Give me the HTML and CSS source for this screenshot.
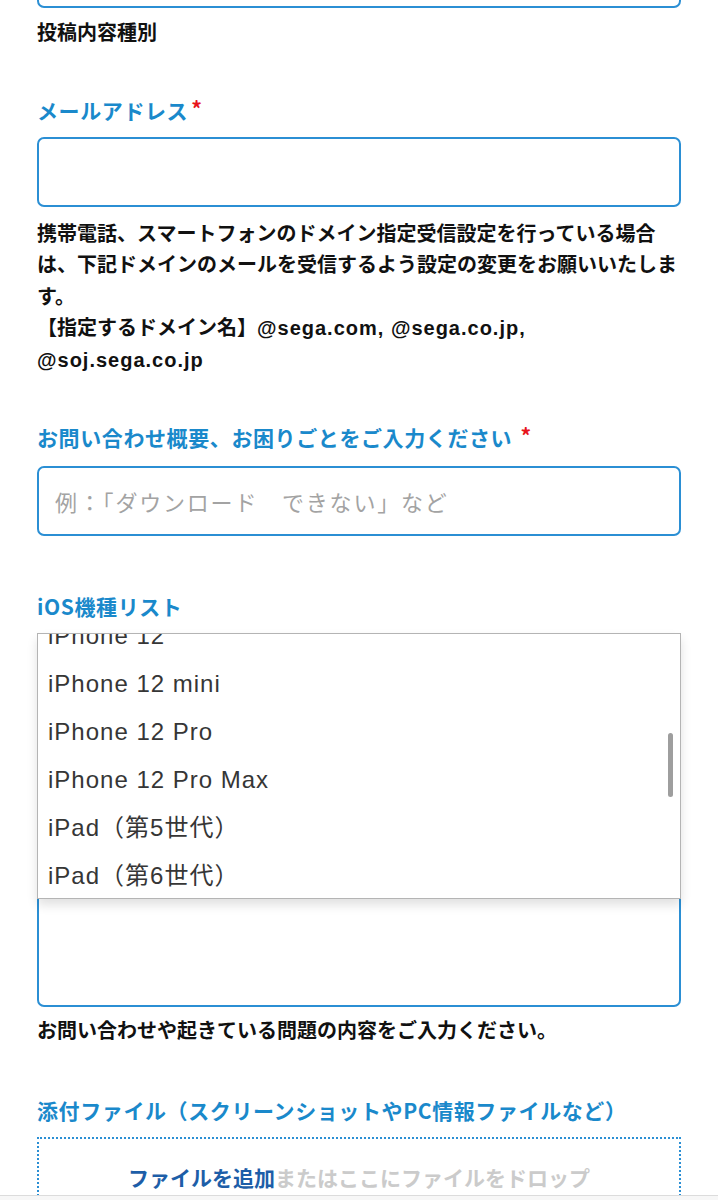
FILE: index.html
```html
<!DOCTYPE html>
<html lang="ja">
<head>
    <meta charset="UTF-8">
    <meta name="viewport" content="width=device-width, initial-scale=1.0">
    <title>お問い合わせフォーム</title>
    <link rel="stylesheet" href="styles.css">
</head>
<body>

    <div class="form">
        <!-- Previous field, scrolled mostly out of view -->
        <div class="input input-top"></div>
        <p class="note note-short">投稿内容種別</p>

        <!-- Mail address -->
        <div class="field">
            <label class="label">メールアドレス<span class="req">*</span></label>
            <div class="input"></div>
            <p class="note">携帯電話、スマートフォンのドメイン指定受信設定を行っている場合は、下記ドメインのメールを受信するよう設定の変更をお願いいたします。<br>【指定するドメイン名】<span class="latin">@sega.com, @sega.co.jp, @soj.sega.co.jp</span></p>
        </div>

        <!-- Summary -->
        <div class="field">
            <label class="label label-loose">お問い合わせ概要、お困りごとをご入力ください <span class="req">*</span></label>
            <div class="input"><span class="placeholder">例：「ダウンロード　できない」など</span></div>
        </div>

        <!-- iOS device list with its open picker -->
        <div class="field field-wide">
            <label class="label">iOS機種リスト</label>
            <div class="select-wrap">
                <div class="input"></div>
                <div class="picker">
                    <ul class="picker-list">
                        <li>iPhone 12</li>
                        <li>iPhone 12 mini</li>
                        <li>iPhone 12 Pro</li>
                        <li>iPhone 12 Pro Max</li>
                        <li>iPad（第5世代）</li>
                        <li>iPad（第6世代）</li>
                    </ul>
                    <div class="scroll-thumb"></div>
                </div>
            </div>
        </div>

        <!-- Details -->
        <div class="field field-wide">
            <label class="label">お問い合わせ内容 <span class="req">*</span></label>
            <div class="input textarea"></div>
            <p class="note note-tight">お問い合わせや起きている問題の内容をご入力ください。</p>
        </div>

        <!-- Attachments -->
        <div class="field field-attach">
            <label class="label">添付ファイル（スクリーンショットやPC情報ファイルなど）</label>
            <div class="dropzone">
                <span class="add-file">ファイルを追加</span><span class="drop-text">またはここにファイルをドロップ</span>
            </div>
        </div>
    </div>

    <div class="bottom-bar"></div>

</body>
</html>
```

FILE: styles.css
```css
/* Page base */
body {
    margin: 0;
    background-color: #ffffff;
    font-family: "Noto Sans CJK JP", sans-serif;
    color: #111111;
}

.form {
    padding: 0 37px 80px 37px;
}

/* Text inputs */
.input {
    box-sizing: border-box;
    height: 70px;
    border: 2px solid #2b8fd4;
    border-radius: 7px;
    background-color: #ffffff;
    display: flex;
    align-items: center;
    padding: 0 16px;
}

.input-top {
    margin-top: -62px;
}

.textarea {
    height: 205px;
}

.placeholder {
    font-size: 22px;
    letter-spacing: 1.8px;
    color: #a3a3a3;
}

/* Field blocks */
.field {
    margin-top: 43px;
}

.field-attach {
    margin-top: 48px;
}

.field-wide {
    margin-top: 55px;
}

.label {
    display: block;
    font-size: 21px;
    line-height: 30px;
    font-weight: 700;
    letter-spacing: 0.6px;
    color: #1a89cb;
    margin-bottom: 12px;
}

.label-loose {
    margin-bottom: 14px;
}

.req {
    color: #e8141c;
    font-size: 21px;
    margin-left: 3px;
    vertical-align: 2px;
}

/* Help texts */
.note {
    margin: 12px 0 0 0;
    font-family: "Liberation Sans", "Noto Sans CJK JP", sans-serif;
    font-size: 20px;
    line-height: 31.6px;
    font-weight: 700;
}

.latin {
    letter-spacing: 1px;
}

.note-short {
    margin-top: 10px;
}

.note-tight {
    margin-top: 9px;
}

/* Open picker of the select */
.select-wrap {
    position: relative;
}

.picker {
    position: absolute;
    top: 0;
    left: 0;
    right: 0;
    height: 266px;
    box-sizing: border-box;
    border: 1px solid #b4b4b4;
    background-color: #ffffff;
    box-shadow: 0px 6px 10px rgba(0, 0, 0, 0.12);
    overflow: hidden;
    z-index: 10;
}

.picker-list {
    list-style: none;
    margin: -22px 0 0 0;
    padding: 0;
}

.picker-list li {
    height: 48px;
    line-height: 48px;
    padding-left: 10px;
    font-family: "Liberation Sans", "Noto Sans CJK JP", sans-serif;
    font-size: 24px;
    letter-spacing: 1px;
    color: #363636;
}

.scroll-thumb {
    position: absolute;
    top: 99px;
    right: 7px;
    width: 5px;
    height: 64px;
    border-radius: 3px;
    background-color: #9e9e9e;
}

/* Attachment drop area */
.dropzone {
    border: 2px dotted #2b8fd4;
    border-bottom: none;
    height: 90px;
    text-align: center;
    padding-top: 23px;
    font-size: 21px;
    font-weight: 700;
    line-height: 30px;
}

.add-file {
    color: #1d5ea8;
}

.drop-text {
    color: #cbcbcb;
}

/* Browser toolbar edge */
.bottom-bar {
    position: fixed;
    left: 0;
    right: 0;
    bottom: 0;
    height: 4px;
    border-top: 1px solid #dcdcdc;
    background-color: #f7f7f7;
}
```
